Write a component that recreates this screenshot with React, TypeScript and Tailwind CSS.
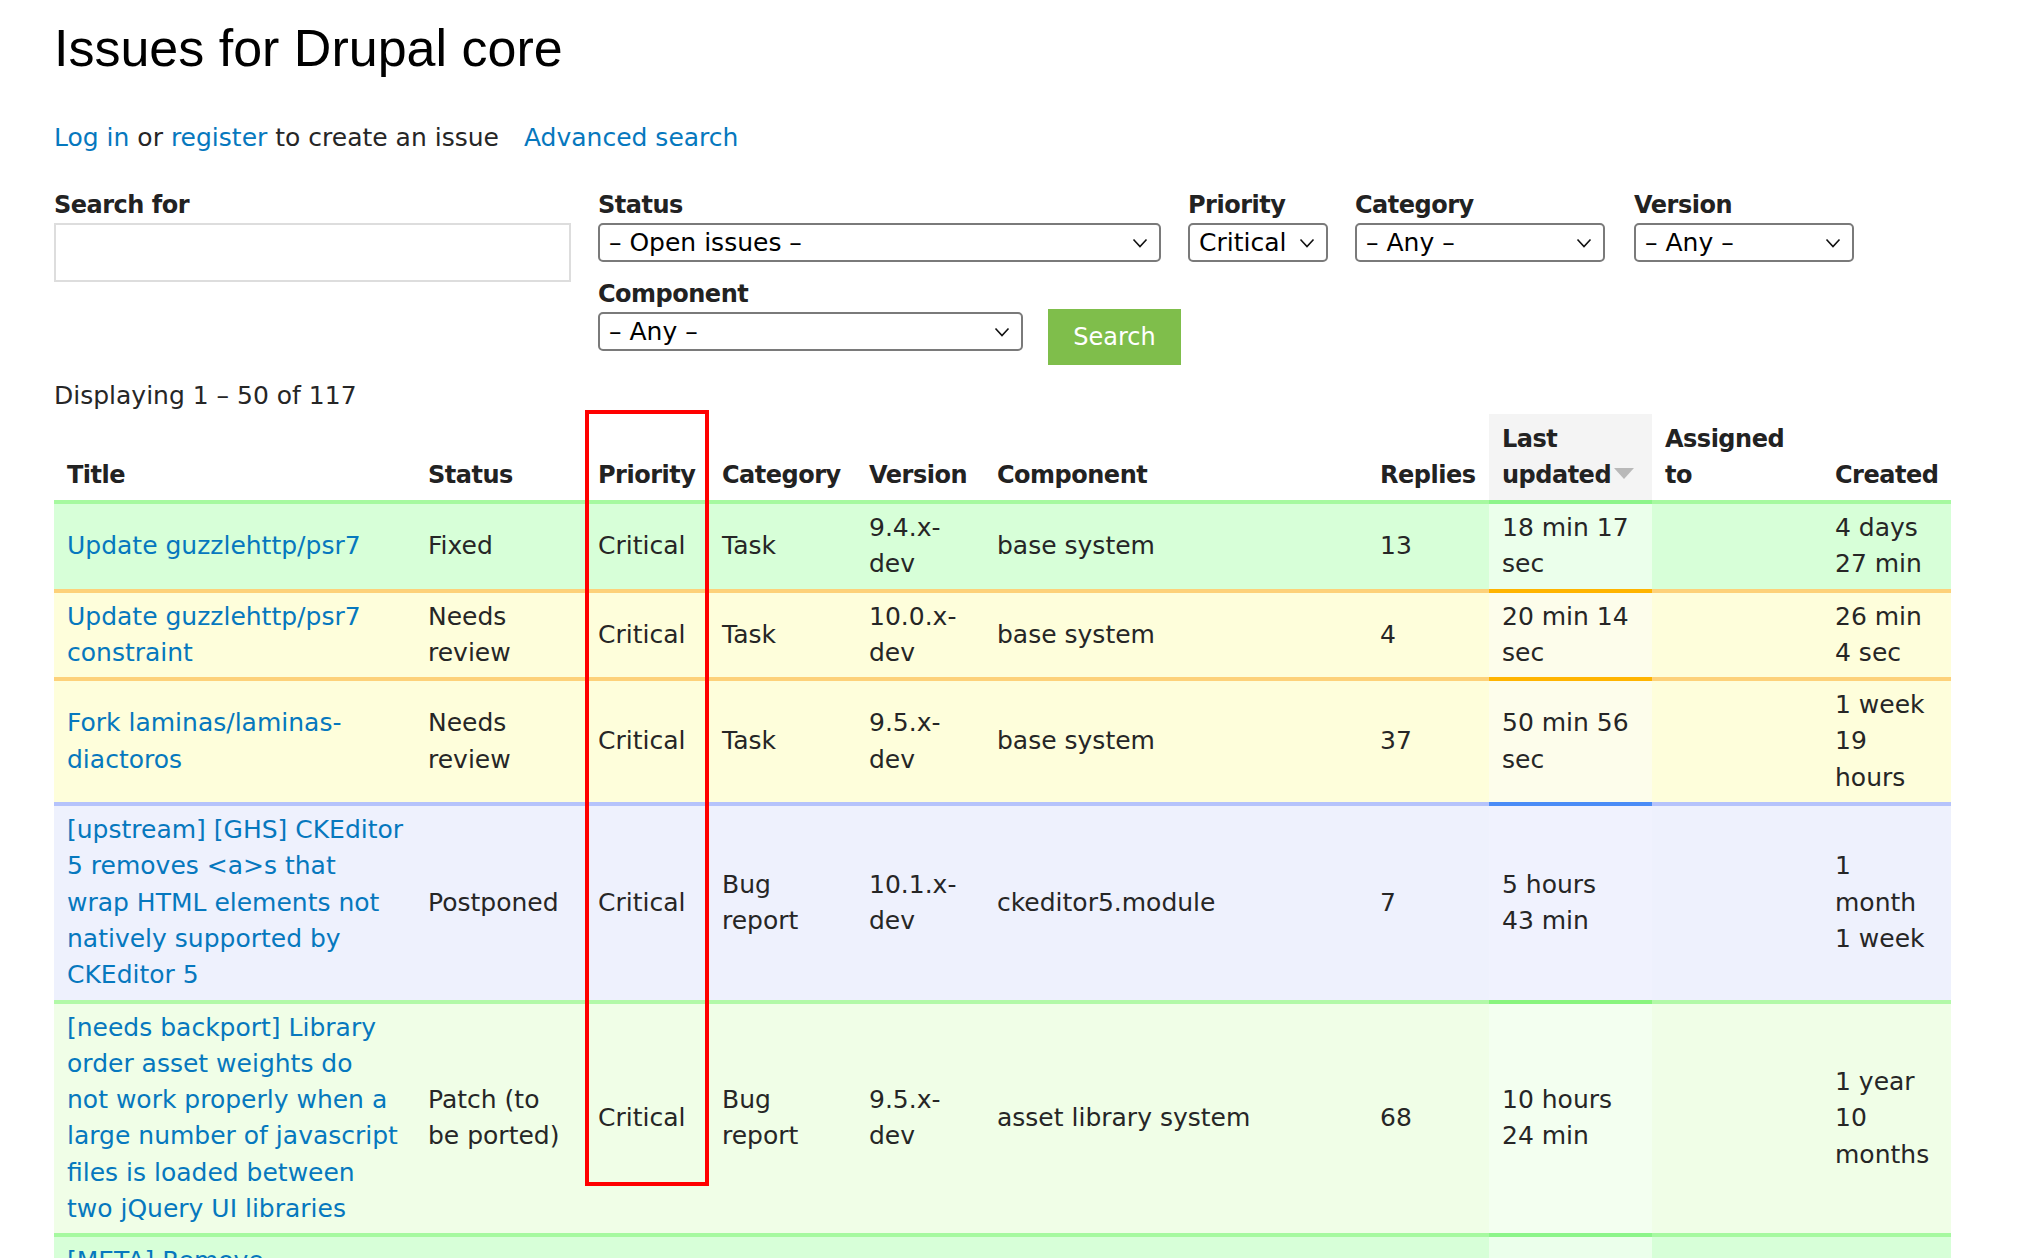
import React from "react";

type Row = {
  bg: string;
  bd: string;
  abg: string;
  abd: string;
  title: string[];
  status: string[];
  category: string[];
  version: string[];
  component: string;
  replies: string;
  updated: string[];
  created: string[];
};

const rows: Row[] = [
  {
    bg: "bg-[#d7ffd8]",
    bd: "border-[#a6f9a0]",
    abg: "bg-[#ebffeb]",
    abd: "border-[#8cf58a]",
    title: ["Update guzzlehttp/psr7"],
    status: ["Fixed"],
    category: ["Task"],
    version: ["9.4.x-", "dev"],
    component: "base system",
    replies: "13",
    updated: ["18 min 17", "sec"],
    created: ["4 days", "27 min"],
  },
  {
    bg: "bg-[#fefedb]",
    bd: "border-[#fdd17a]",
    abg: "bg-[#fdfdeb]",
    abd: "border-[#ffb400]",
    title: ["Update guzzlehttp/psr7", "constraint"],
    status: ["Needs", "review"],
    category: ["Task"],
    version: ["10.0.x-", "dev"],
    component: "base system",
    replies: "4",
    updated: ["20 min 14", "sec"],
    created: ["26 min", "4 sec"],
  },
  {
    bg: "bg-[#fefedb]",
    bd: "border-[#fdd17a]",
    abg: "bg-[#fdfdeb]",
    abd: "border-[#ffb400]",
    title: ["Fork laminas/laminas-", "diactoros"],
    status: ["Needs", "review"],
    category: ["Task"],
    version: ["9.5.x-", "dev"],
    component: "base system",
    replies: "37",
    updated: ["50 min 56", "sec"],
    created: ["1 week", "19", "hours"],
  },
  {
    bg: "bg-[#eef1fd]",
    bd: "border-[#b5c3fb]",
    abg: "bg-[#f0f2fe]",
    abd: "border-[#4a8cf6]",
    title: [
      "[upstream] [GHS] CKEditor",
      "5 removes <a>s that",
      "wrap HTML elements not",
      "natively supported by",
      "CKEditor 5",
    ],
    status: ["Postponed"],
    category: ["Bug", "report"],
    version: ["10.1.x-", "dev"],
    component: "ckeditor5.module",
    replies: "7",
    updated: ["5 hours", "43 min"],
    created: ["1", "month", "1 week"],
  },
  {
    bg: "bg-[#f0fee7]",
    bd: "border-[#b2f9a8]",
    abg: "bg-[#f3fff0]",
    abd: "border-[#88f57e]",
    title: [
      "[needs backport] Library",
      "order asset weights do",
      "not work properly when a",
      "large number of javascript",
      "files is loaded between",
      "two jQuery UI libraries",
    ],
    status: ["Patch (to", "be ported)"],
    category: ["Bug", "report"],
    version: ["9.5.x-", "dev"],
    component: "asset library system",
    replies: "68",
    updated: ["10 hours", "24 min"],
    created: ["1 year", "10", "months"],
  },
  {
    bg: "bg-[#d7ffd8]",
    bd: "border-[#a6f9a0]",
    abg: "bg-[#ebffeb]",
    abd: "border-[#8cf58a]",
    title: [
      "[META] Remove",
      "dependencies on",
      "jQuery UI from",
      "Drupal core",
      "components",
    ],
    status: ["Active"],
    category: ["Plan"],
    version: ["10.1.x-", "dev"],
    component: "javascript",
    replies: "42",
    updated: ["12 hours", "3 min"],
    created: ["2 years", "1 month"],
  },
];

function Lines({ lines }: { lines: string[] }) {
  return (
    <>
      {lines.map((l, i) => (
        <div key={i} className="whitespace-nowrap">
          {l}
        </div>
      ))}
    </>
  );
}

function Chevron() {
  return (
    <svg width="16" height="10" viewBox="0 0 16 10" className="shrink-0">
      <path d="M1.5 1.5 L8 8.5 L14.5 1.5" fill="none" stroke="#111" strokeWidth="1.6" />
    </svg>
  );
}

function SelectBox({ w, text }: { w: string; text: string }) {
  return (
    <div
      className={`${w} h-[39px] border-2 border-[#7a7a7a] rounded-[5px] bg-white flex items-center justify-between pl-[9px] pr-[11px] text-[25px] leading-[36px] text-black`}
    >
      <span className="whitespace-nowrap">{text}</span>
      <Chevron />
    </div>
  );
}

function Label({ children }: { children: React.ReactNode }) {
  return (
    <div className="text-[24px] leading-[36px] font-bold tracking-[-0.5px] text-[#222]">
      {children}
    </div>
  );
}

const thBase =
  "px-[13px] pt-[7px] pb-[7px] align-bottom text-left text-[24px] leading-[36px] font-bold tracking-[-0.5px] text-[#222] whitespace-nowrap";
const tdBase = "px-[13px] py-[6px] border-t-4 align-middle";

export default function App() {
  return (
    <div
      className="relative h-[1258px] overflow-hidden bg-white pl-[54px] text-[#262626]"
      style={{ fontFamily: '"DejaVu Sans", "Liberation Sans", sans-serif' }}
    >
      <h1
        className="pt-[22px] text-[52px] leading-[52px] text-black"
        style={{ fontFamily: '"Liberation Sans", Arial, sans-serif' }}
      >
        Issues for Drupal core
      </h1>

      <div className="mt-[46px] text-[25px] leading-[36px] whitespace-nowrap">
        <a className="text-[#0678be]">Log in</a> or{" "}
        <a className="text-[#0678be]">register</a> to create an issue
        <a className="ml-[25px] text-[#0678be]">Advanced search</a>
      </div>

      <div className="mt-[31px] flex">
        <div className="w-[517px] mr-[27px]">
          <Label>Search for</Label>
          <div className="h-[59px] border-2 border-[#dddddd] bg-white" />
        </div>
        <div className="flex flex-col gap-[14px]">
          <div className="flex">
            <div>
              <Label>Status</Label>
              <SelectBox w="w-[563px]" text="– Open issues –" />
            </div>
            <div className="ml-[27px]">
              <Label>Priority</Label>
              <SelectBox w="w-[140px]" text="Critical" />
            </div>
            <div className="ml-[27px]">
              <Label>Category</Label>
              <SelectBox w="w-[250px]" text="– Any –" />
            </div>
            <div className="ml-[29px]">
              <Label>Version</Label>
              <SelectBox w="w-[220px]" text="– Any –" />
            </div>
          </div>
          <div className="flex items-start">
            <div>
              <Label>Component</Label>
              <SelectBox w="w-[425px]" text="– Any –" />
            </div>
            <button className="ml-[25px] mt-[33px] w-[133px] h-[56px] bg-[#7fbe4b] text-white text-[24px] leading-[36px]">
              Search
            </button>
          </div>
        </div>
      </div>

      <div className="mt-[13px] text-[25px] leading-[36px]">Displaying 1 – 50 of 117</div>

      <table className="table-fixed border-separate border-spacing-0 w-[1897px] text-[25px] leading-[36.3px]">
        <colgroup>
          <col className="w-[361px]" />
          <col className="w-[170px]" />
          <col className="w-[124px]" />
          <col className="w-[147px]" />
          <col className="w-[128px]" />
          <col className="w-[383px]" />
          <col className="w-[122px]" />
          <col className="w-[163px]" />
          <col className="w-[170px]" />
          <col className="w-[129px]" />
        </colgroup>
        <thead>
          <tr>
            <th className={thBase}>Title</th>
            <th className={thBase}>Status</th>
            <th className={thBase}>Priority</th>
            <th className={thBase}>Category</th>
            <th className={thBase}>Version</th>
            <th className={thBase}>Component</th>
            <th className={thBase}>Replies</th>
            <th className={`${thBase} bg-[#f4f4f4]`}>
              <div>Last</div>
              <div className="flex items-center">
                updated
                <svg width="22" height="13" viewBox="0 0 22 13" className="ml-[2px] mt-[-4px]">
                  <path d="M1 1 L21 1 L11 12 Z" fill="#b9b9b9" />
                </svg>
              </div>
            </th>
            <th className={thBase}>
              <div>Assigned</div>
              <div>to</div>
            </th>
            <th className={thBase}>Created</th>
          </tr>
        </thead>
        <tbody>
          {rows.map((r, i) => (
            <tr key={i} className={r.bg}>
              <td className={`${tdBase} ${r.bd} text-[#0678be] ${i === 5 ? "align-top" : ""}`}>
                <Lines lines={r.title} />
              </td>
              <td className={`${tdBase} ${r.bd}`}>
                <Lines lines={r.status} />
              </td>
              <td className={`${tdBase} ${r.bd}`}>Critical</td>
              <td className={`${tdBase} ${r.bd}`}>
                <Lines lines={r.category} />
              </td>
              <td className={`${tdBase} ${r.bd}`}>
                <Lines lines={r.version} />
              </td>
              <td className={`${tdBase} ${r.bd} whitespace-nowrap`}>{r.component}</td>
              <td className={`${tdBase} ${r.bd}`}>{r.replies}</td>
              <td className={`${tdBase} ${r.abd} ${r.abg}`}>
                <Lines lines={r.updated} />
              </td>
              <td className={`${tdBase} ${r.bd}`}></td>
              <td className={`${tdBase} ${r.bd}`}>
                <Lines lines={r.created} />
              </td>
            </tr>
          ))}
        </tbody>
      </table>

      <div className="pointer-events-none absolute left-[585px] top-[410px] w-[124px] h-[776px] border-[4px] border-[#ff0000]" />
    </div>
  );
}
